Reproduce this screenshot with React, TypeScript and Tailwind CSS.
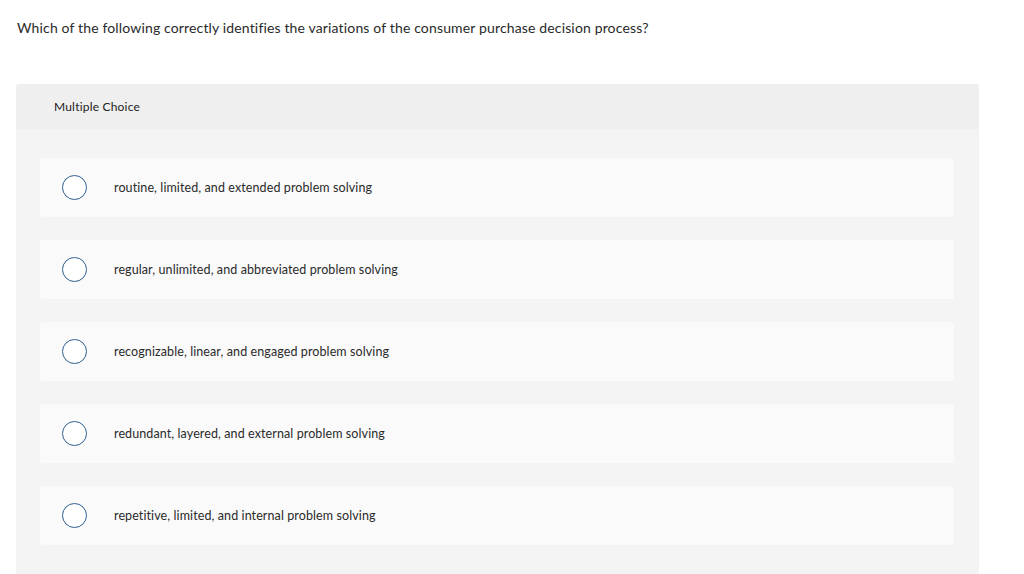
import React from 'react';

const options = [
  'routine, limited, and extended problem solving',
  'regular, unlimited, and abbreviated problem solving',
  'recognizable, linear, and engaged problem solving',
  'redundant, layered, and external problem solving',
  'repetitive, limited, and internal problem solving',
];

export default function App() {
  return (
    <div className="min-h-[574px] bg-white text-[#2a2a2a] font-['Lato',sans-serif] [font-variant-ligatures:none]">
      <div className="pt-[19px] pl-[17px] text-[14px] leading-[18px] tracking-[0.15px]">
        Which of the following correctly identifies the variations of the consumer purchase decision process?
      </div>

      <div className="mt-[47px] ml-4 w-[963px] rounded-t-[3px] overflow-hidden bg-[#f4f4f4]">
        {/* header */}
        <div className="h-[45px] bg-[#efefef] pl-[38px] flex items-center text-[12px] tracking-[0.2px] text-[#222]">
          Multiple Choice
        </div>

        {/* choices */}
        <div className="pl-6 pr-[25px] pt-[29px] pb-[29px] flex flex-col gap-[23px]">
          {options.map((opt) => (
            <div key={opt} className="h-[59px] rounded-[3px] bg-[#fafafa] flex items-center pl-[22px]">
              <span className="w-[25px] h-[25px] rounded-full border border-[#2f5f8f] bg-white shrink-0" />
              <span className="ml-[27px] mt-[2px] text-[12.5px] tracking-[0.1px] text-[#2a2a2a]">{opt}</span>
            </div>
          ))}
        </div>
      </div>
    </div>
  );
}
